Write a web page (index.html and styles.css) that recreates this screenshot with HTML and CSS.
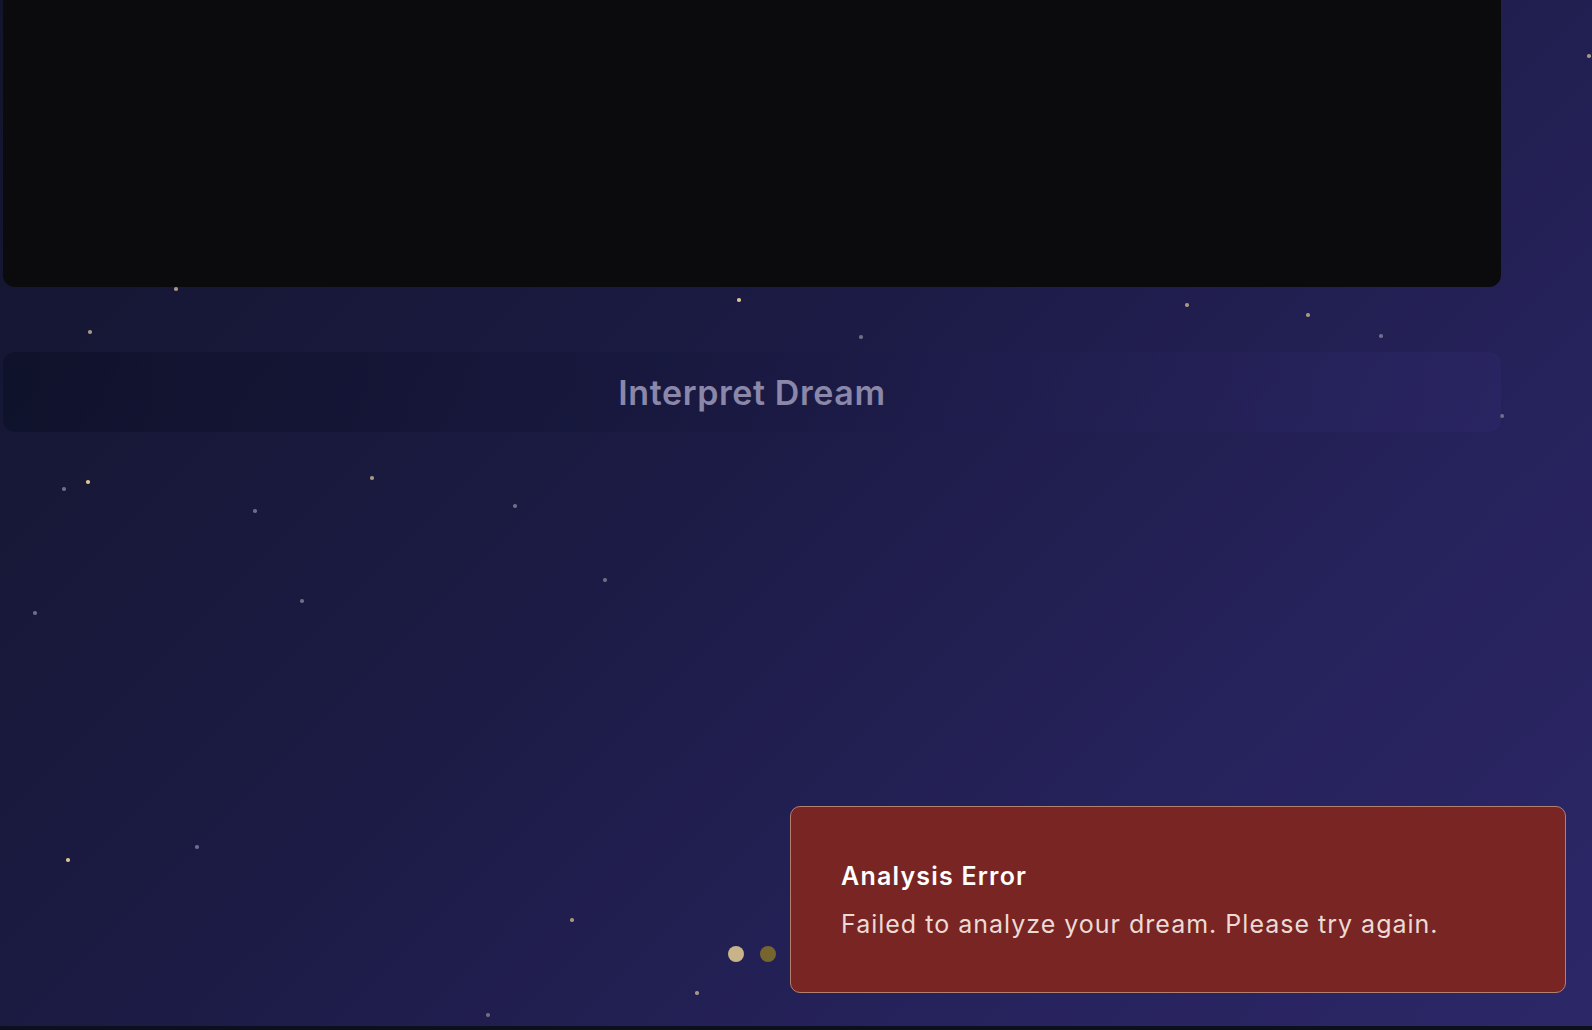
FILE: index.html
```html
<!DOCTYPE html>
<html lang="en">
<head>
<meta charset="utf-8">
<title>Dream Interpreter</title>
<link rel="stylesheet" href="styles.css">
</head>
<body>
<div class="sky">
  <span class="star" style="left:1589px;top:56px"></span>
  <span class="star" style="left:176px;top:289px"></span>
  <span class="star gold" style="left:739px;top:300px"></span>
  <span class="star" style="left:90px;top:332px"></span>
  <span class="star dim" style="left:861px;top:337px"></span>
  <span class="star" style="left:1187px;top:305px"></span>
  <span class="star" style="left:1308px;top:315px"></span>
  <span class="star dim" style="left:1381px;top:336px"></span>
  <span class="star dim" style="left:1502px;top:416px"></span>
  <span class="star dim" style="left:64px;top:489px"></span>
  <span class="star gold" style="left:88px;top:482px"></span>
  <span class="star" style="left:372px;top:478px"></span>
  <span class="star dim" style="left:255px;top:511px"></span>
  <span class="star dim" style="left:515px;top:506px"></span>
  <span class="star dim" style="left:605px;top:580px"></span>
  <span class="star dim" style="left:35px;top:613px"></span>
  <span class="star dim" style="left:302px;top:601px"></span>
  <span class="star gold" style="left:68px;top:860px"></span>
  <span class="star dim" style="left:197px;top:847px"></span>
  <span class="star" style="left:572px;top:920px"></span>
  <span class="star" style="left:697px;top:993px"></span>
  <span class="star dim" style="left:488px;top:1015px"></span>
</div>

<main class="page">
  <div class="editor"></div>
  <button class="interpret" disabled>Interpret Dream</button>
  <div class="loader">
    <span class="dot bright"></span>
    <span class="dot faded"></span>
  </div>
</main>

<div class="footer-strip"></div>

<div class="toast" role="alert">
  <div class="toast-title">Analysis Error</div>
  <div class="toast-body">Failed to analyze your dream. Please try again.</div>
</div>
</body>
</html>
```
FILE: styles.css
```css
* { box-sizing: border-box; }

html, body {
  margin: 0;
  padding: 0;
}

body {
  width: 1592px;
  height: 1030px;
  overflow: hidden;
  position: relative;
  font-family: Inter, "Noto Sans", "Liberation Sans", sans-serif;
  background: linear-gradient(135deg, #13152d 0%, #1c1b45 45%, #26225c 75%, #2c2767 100%);
  display: flex;
  flex-direction: column;
}

.sky {
  position: absolute;
  inset: 0;
  pointer-events: none;
}

.star {
  position: absolute;
  width: 3.5px;
  height: 3.5px;
  margin: -1.75px 0 0 -1.75px;
  border-radius: 50%;
  background: #a69780;
}
.star.gold { background: #d9c394; }
.star.dim { background: #716c86; }

.page {
  flex: 1;
  position: relative;
  padding: 0 91px 0 3px;
  display: flex;
  flex-direction: column;
}

.editor {
  height: 287px;
  background: #0b0b0e;
  border-radius: 0 0 12px 12px;
}

.interpret {
  margin-top: 65px;
  height: 80px;
  border: none;
  border-radius: 12px;
  background: linear-gradient(90deg, rgba(8, 12, 32, 0.45) 0%, rgba(20, 20, 60, 0.25) 50%, rgba(48, 42, 112, 0.35) 100%);
  color: #8a87a9;
  font-family: Inter, "Noto Sans", sans-serif;
  font-size: 34px;
  font-weight: 600;
  letter-spacing: 0.6px;
  cursor: not-allowed;
  padding: 0;
}

.loader {
  margin-top: 514px;
  display: flex;
  justify-content: center;
  gap: 16px;
}

.dot {
  width: 16px;
  height: 16px;
  border-radius: 50%;
}
.dot.bright { background: #c9b48a; }
.dot.faded { background: #776530; }

.footer-strip {
  position: absolute;
  left: 0;
  right: 0;
  bottom: 0;
  height: 4px;
  background: #0c0f1d;
}

.toast {
  position: fixed;
  right: 26px;
  bottom: 37px;
  width: 776px;
  height: 187px;
  padding: 0 50px;
  background: #782523;
  border: 1.5px solid #b3806f;
  border-radius: 10px;
  display: flex;
  flex-direction: column;
  justify-content: center;
  gap: 16px;
  color: #ffffff;
}

.toast-title {
  font-size: 25px;
  line-height: 32px;
  font-weight: 600;
  letter-spacing: 1.2px;
}

.toast-body {
  font-size: 25px;
  line-height: 32px;
  font-weight: 400;
  letter-spacing: 1px;
  color: #ecdad7;
}
```
